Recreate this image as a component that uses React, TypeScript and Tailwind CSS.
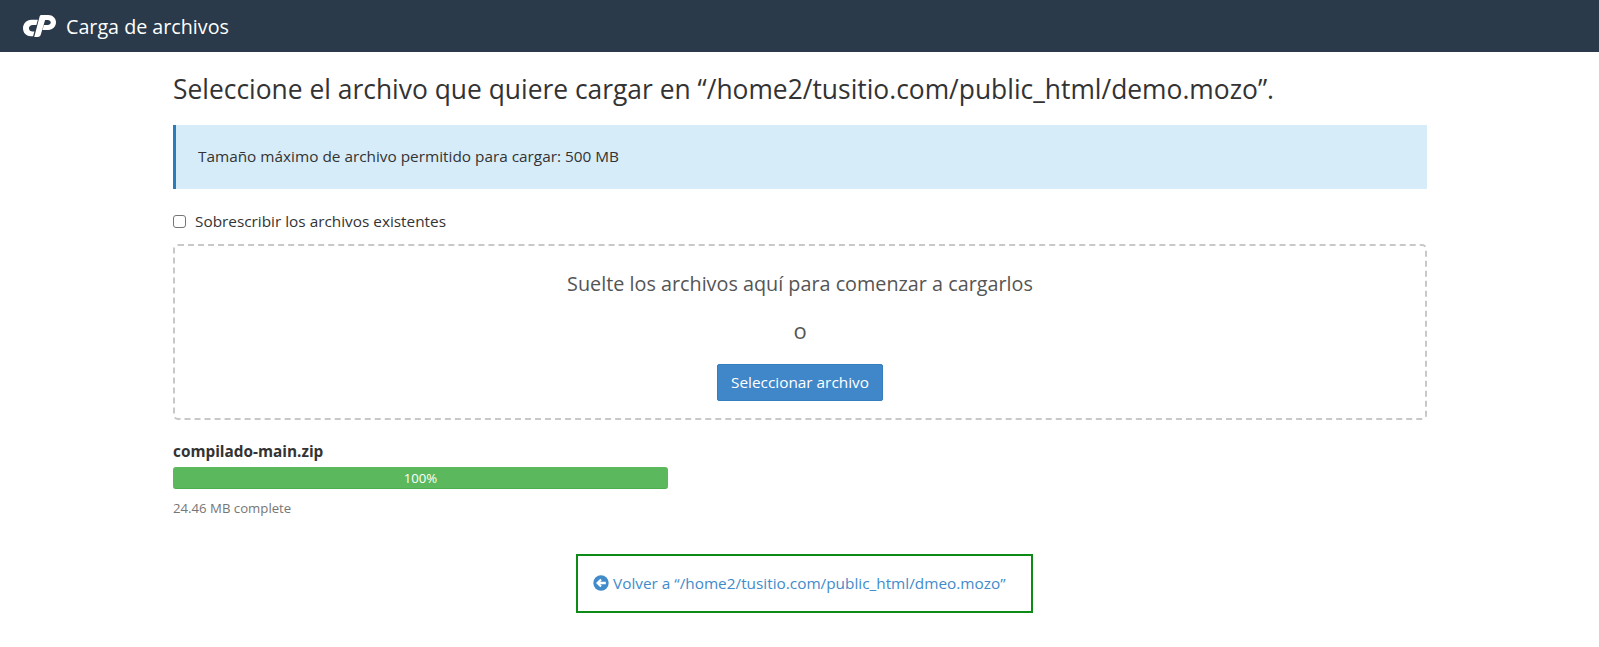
import React from "react";

function CpLogo() {
  return (
    <svg width="33" height="22" viewBox="0 0 100 66" className="shrink-0" fill="#fff">
      <path d="M25 14H45L40.500 30H29C23 30 18 34 18 40C18 46 23 50 29 50H34.500L30.500 64H23C9 64 0 53 0 40C0 25 11 14 25 14Z" />
      <path d="M56 0H77C90 0 100 10 100 22C100 35 90 45 77 45H59L63.500 30H75C80 30 84 27 84 22.500C84 18 80 15 75 15H67L54 59C52.800 63.500 50 66 45 66H34L50 6C51 2 53 0 56 0Z" />
    </svg>
  );
}

export default function App() {
  return (
    <div className="min-h-[647px] bg-white font-['Open_Sans',sans-serif] text-[15.35px] text-[#333]">
      <header className="h-[52px] bg-[#2a3a4b] flex items-center pl-[23px] gap-[10px]">
        <CpLogo />
        <span className="text-white text-[19.7px] pt-[1px]">Carga de archivos</span>
      </header>
      <main className="pl-[173px] pr-[172px]">
        <h1 className="text-[26.4px] leading-[26px] font-normal mt-[24px]">
          Seleccione el archivo que quiere cargar en “/home2/tusitio.com/public_html/demo.mozo”.
        </h1>
        <div className="mt-[23px] h-[64px] bg-[#d7ecf9] border-l-[3px] border-[#2b7cb9] flex items-center pl-[22px]">
          Tamaño máximo de archivo permitido para cargar: 500 MB
        </div>
        <label className="mt-[22px] flex items-center gap-[9px] h-[20px]">
          <span className="w-[13px] h-[13px] rounded-[3px] border border-[#767676] bg-white shrink-0" />
          Sobrescribir los archivos existentes
        </label>
        <section className="mt-[13px] h-[176px] border-2 border-dashed border-[#c8c8c8] rounded-[5px] flex flex-col items-center">
          <p className="mt-[25px] text-[19.8px] leading-[26px] text-[#555]">Suelte los archivos aquí para comenzar a cargarlos</p>
          <p className="mt-[20px] text-[22px] leading-[26px] text-[#555]">o</p>
          <button className="mt-[21px] h-[37px] w-[166px] bg-[#3f87c9] border border-[#357ebd] rounded-[2px] text-white">
            Seleccionar archivo
          </button>
        </section>
        <p className="mt-[21px] font-bold leading-[20px]">compilado-main.zip</p>
        <div className="mt-[6px] w-[495px] h-[22px] bg-[#5cb85c] border-b border-[#4cae4c] rounded-[3px] text-white text-[13.2px] leading-[22px] text-center">
          100%
        </div>
        <p className="mt-[9px] text-[13.2px] leading-[20px] text-[#767676]">24.46 MB complete</p>
        <div className="mt-[36px] ml-[403px] w-[457px] h-[59px] border-2 border-[#0e8a16] flex items-center pl-[15px] gap-[4px] text-[#428bca]">
          <svg width="16" height="16" viewBox="0 0 16 16" className="shrink-0 mb-[1px]">
            <circle cx="8" cy="8" r="7.700" fill="#428bca" />
            <path d="M3 8 7.300 3.800 8.800 5.300 7.200 6.700H12.800V9.300H7.200L8.800 10.700 7.300 12.200Z" fill="#fff" />
          </svg>
          <a className="pt-[1px]">Volver a “/home2/tusitio.com/public_html/dmeo.mozo”</a>
        </div>
      </main>
    </div>
  );
}
